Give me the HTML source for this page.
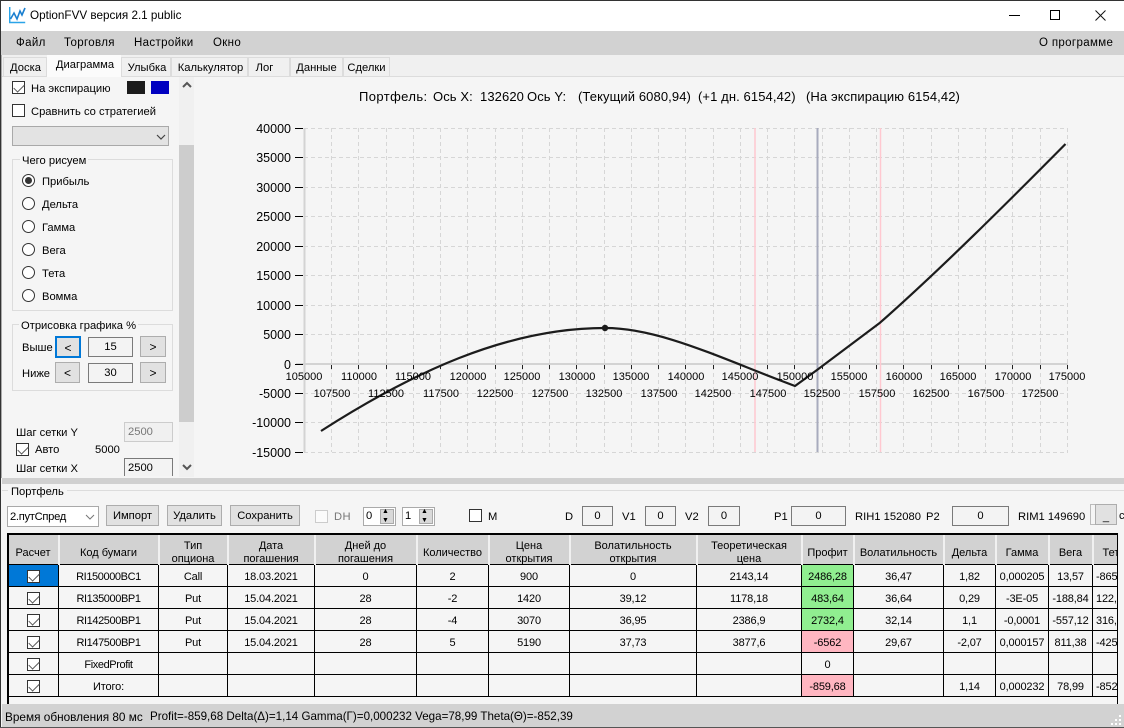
<!DOCTYPE html>
<html><head><meta charset="utf-8"><style>
*{box-sizing:border-box}
html,body{margin:0;padding:0}
body{width:1124px;height:728px;position:relative;overflow:hidden;background:#f5f5f5;font:11.2px "Liberation Sans",sans-serif;color:#000}
.a{position:absolute}
.t{position:absolute;white-space:nowrap;line-height:14px}
.m{font-size:11.5px;letter-spacing:.35px}
.h{font-size:13px;letter-spacing:.1px;top:90px}
.cb{position:absolute;width:13px;height:13px;border:1px solid #333;background:#fff}
.r{position:absolute;width:13px;height:13px;border:1px solid #333;border-radius:50%;background:#fff;left:22px}
.btn{position:absolute;background:#e1e1e1;border:1px solid #adadad;text-align:center;line-height:19px;padding-top:1px}
.ar{font-size:12px;line-height:18px}
.box{position:absolute;border:1px solid #7a7a7a;background:#f3f3f3;text-align:center;line-height:18px}
.tab{position:absolute;top:57px;height:19px;border:1px solid #dcdcdc;border-bottom:0;background:#f0f0f0;text-align:center;line-height:20px}
table{position:absolute;left:8px;top:530px;border-collapse:collapse;table-layout:fixed;width:1109px;height:165px}
td,th{border:1px solid #000;padding:0;text-align:center;font-weight:normal;font-size:11px;line-height:13px;overflow:hidden;white-space:nowrap}
th{background:#d2d2d2;border:0;border-right:2px solid #f0f0f0;height:33px;border-bottom:1px solid #000;border-top:2px solid #000;padding-top:6px}
th span{position:relative;top:2px}
td{height:22px;background:#f5f5f5;padding-top:4px;letter-spacing:-.15px}
td.n{letter-spacing:-.4px}
td.l{text-align:left;padding-left:3px}
td.g{background:#90ee90}td.p{background:#ffb6c1}td.s{background:#0078d7}
.c{display:inline-block;width:13px;height:13px;border:1px solid #333;background:#fff;vertical-align:middle;position:relative;top:-1px}
.c:after,.cb.k:after{content:"";position:absolute;left:1px;top:1px;width:9px;height:5px;border-left:1px solid #555;border-bottom:1px solid #555;transform:rotate(-45deg);margin-top:1px}
</style></head><body>

<div class="a" style="left:0;top:0;width:1124px;height:31px;background:#fff;border-top:1px solid #333"></div>
<svg class="a" style="left:9px;top:6px" width="17" height="18" viewBox="0 0 17 18"><path d="M.7 1v15.500h15.500" fill="none" stroke="#2aa4e8" stroke-width="1.500"/><path d="M1.500 13 5 7l3 6 3-8 2 4 3-7" fill="none" stroke="#1a7fd0" stroke-width="1.600"/></svg>
<div class="t" style="left:30px;top:9px;font-size:11.7px">OptionFVV версия 2.1 public</div>
<div class="a" style="left:1009px;top:15px;width:11px;height:1px;background:#000"></div>
<div class="a" style="left:1050px;top:10px;width:10px;height:10px;border:1px solid #000"></div>
<svg class="a" style="left:1095px;top:10px" width="11" height="11"><path d="M.5.5l10 10M10.500.5l-10 10" stroke="#111" fill="none"/></svg>

<div class="a" style="left:0;top:31px;width:1124px;height:24px;background:#d2d2d2"></div>
<div class="t m" style="left:16px;top:36px">Файл</div>
<div class="t m" style="left:64px;top:36px">Торговля</div>
<div class="t m" style="left:134px;top:36px">Настройки</div>
<div class="t m" style="left:213px;top:36px">Окно</div>
<div class="t m" style="left:1039px;top:36px">О программе</div>

<div class="a" style="left:0;top:55px;width:1124px;height:21px;background:#f0f0f0"></div>
<div class="tab" style="left:3px;width:44px;padding-left:1px">Доска</div>
<div class="tab" style="left:121px;width:50px;padding-left:2px">Улыбка</div>
<div class="tab" style="left:171px;width:77px;padding-left:2px">Калькулятор</div>
<div class="tab" style="left:248px;width:42px;padding-right:9px">Лог</div>
<div class="tab" style="left:290px;width:53px">Данные</div>
<div class="tab" style="left:343px;width:47px">Сделки</div>
<div class="tab" style="left:47px;width:74px;top:55px;height:22px;background:#fbfbfb;border:0;line-height:21px;padding-left:2px">Диаграмма</div>
<div class="a" style="left:2px;top:76px;width:45px;height:1px;background:#dcdcdc"></div>
<div class="a" style="left:121px;top:76px;width:1003px;height:1px;background:#dcdcdc"></div>

<div class="a" style="left:0;top:0;width:1px;height:728px;background:#333"></div>
<div class="a" style="left:1px;top:55px;width:1px;height:423px;background:#aaa"></div>

<!-- left panel -->
<div class="a" style="left:179px;top:77px;width:15px;height:400px;background:#f0f0f0"></div>
<div class="a" style="left:179px;top:145px;width:15px;height:277px;background:#cdcdcd"></div>
<svg class="a" style="left:182px;top:81px" width="10" height="8"><path d="M1 6l4-4 4 4" fill="none" stroke="#555" stroke-width="2"/></svg>
<svg class="a" style="left:182px;top:463px" width="10" height="8"><path d="M1 2l4 4 4-4" fill="none" stroke="#555" stroke-width="2"/></svg>

<div class="cb k" style="left:12px;top:81px"></div>
<div class="t" style="left:31px;top:82px">На экспирацию</div>
<div class="a" style="left:127px;top:81px;width:18px;height:13px;background:#1c1c1c"></div>
<div class="a" style="left:151px;top:81px;width:18px;height:13px;background:#0000c0"></div>
<div class="cb" style="left:12px;top:104px"></div>
<div class="t" style="left:31px;top:105px">Сравнить со стратегией</div>
<div class="a" style="left:12px;top:126px;width:157px;height:20px;background:#e3e3e3;border:1px solid #a9a9a9"></div>
<svg class="a" style="left:156px;top:134px" width="10" height="7"><path d="M1 1l4 4 4-4" fill="none" stroke="#444" stroke-width="1.200"/></svg>

<div class="a" style="left:12px;top:159px;width:161px;height:152px;border:1px solid #dcdcdc"></div>
<div class="t" style="left:20px;top:155px;background:#f5f5f5;padding:0 2px;line-height:12px">Чего рисуем</div>
<div class="r" style="top:174px"></div><div class="a" style="left:25px;top:177px;width:7px;height:7px;border-radius:50%;background:#333"></div>
<div class="t" style="left:42px;top:175px">Прибыль</div>
<div class="r" style="top:197px"></div><div class="t" style="left:42px;top:198px">Дельта</div>
<div class="r" style="top:220px"></div><div class="t" style="left:42px;top:221px">Гамма</div>
<div class="r" style="top:243px"></div><div class="t" style="left:42px;top:244px">Вега</div>
<div class="r" style="top:266px"></div><div class="t" style="left:42px;top:267px">Тета</div>
<div class="r" style="top:289px"></div><div class="t" style="left:42px;top:290px">Вомма</div>

<div class="a" style="left:12px;top:324px;width:161px;height:67px;border:1px solid #dcdcdc"></div>
<div class="t" style="left:19px;top:320px;background:#f5f5f5;padding:0 2px;line-height:12px">Отрисовка графика %</div>
<div class="t" style="left:22px;top:341px">Выше</div>
<div class="btn ar" style="left:55px;top:336px;width:26px;height:22px;border:2px solid #0078d7">&lt;</div>
<div class="box" style="left:88px;top:337px;width:45px;height:20px">15</div>
<div class="btn ar" style="left:140px;top:336px;width:26px;height:21px">&gt;</div>
<div class="t" style="left:22px;top:367px">Ниже</div>
<div class="btn ar" style="left:55px;top:362px;width:25px;height:21px">&lt;</div>
<div class="box" style="left:88px;top:363px;width:45px;height:20px">30</div>
<div class="btn ar" style="left:140px;top:362px;width:26px;height:21px">&gt;</div>

<div class="t" style="left:16px;top:426px">Шаг сетки Y</div>
<div class="a" style="left:124px;top:422px;width:49px;height:20px;border:1px solid #ccc;background:#f0f0f0;color:#777;padding:3px 3px;line-height:13px">2500</div>
<div class="cb k" style="left:16px;top:443px"></div>
<div class="t" style="left:35px;top:443px">Авто</div>
<div class="t" style="left:95px;top:443px">5000</div>
<div class="t" style="left:16px;top:462px">Шаг сетки X</div>
<div class="a" style="left:124px;top:458px;width:49px;height:18px;border:1px solid #7a7a7a;border-bottom:0;background:#f3f3f3;padding:3px;line-height:13px">2500</div>

<!-- chart -->
<div class="t h" style="left:359px;letter-spacing:.4px">Портфель:</div>
<div class="t h" style="left:433px">Ось X:</div>
<div class="t h" style="left:480px">132620</div>
<div class="t h" style="left:527px">Ось Y:</div>
<div class="t h" style="left:578px">(Текущий 6080,94)</div>
<div class="t h" style="left:698px">(+1 дн. 6154,42)</div>
<div class="t h" style="left:806px">(На экспирацию 6154,42)</div>
<svg class="a" style="left:194px;top:110px" width="930" height="368" viewBox="194 110 930 368" font-family="Liberation Sans" font-size="12.5">
<g stroke="#d6d6d6" stroke-dasharray="4 3" fill="none">
<path d="M304 128.500H1068M304 157.500H1068M304 187.500H1068M304 216.500H1068M304 246.500H1068M304 275.500H1068M304 305.500H1068M304 334.500H1068M304 393.500H1068M304 422.500H1068M304 452.500H1068"/>
<path d="M331.500 128V452M358.500 128V452M386.500 128V452M413.500 128V452M440.500 128V452M467.500 128V452M495.500 128V452M522.500 128V452M549.500 128V452M576.500 128V452M604.500 128V452M631.500 128V452M658.500 128V452M685.500 128V452M713.500 128V452M740.500 128V452M767.500 128V452M794.500 128V452M822.500 128V452M849.500 128V452M876.500 128V452M903.500 128V452M931.500 128V452M958.500 128V452M985.500 128V452M1012.500 128V452M1040.500 128V452M1067.500 128V452"/>
</g>
<path d="M304.500 128V452" stroke="#d3d3d3" stroke-width="2"/>
<path d="M296 364H1068" stroke="#d3d3d3" stroke-width="2"/>
<path d="M755 128V452M880.500 128V452" stroke="#ffc8d0" stroke-width="1.500"/>
<path d="M817.500 128V452" stroke="#a8abbd" stroke-width="2"/>
<path d="M295 128.500h8M295 157.500h8M295 187.500h8M295 216.500h8M295 246.500h8M295 275.500h8M295 305.500h8M295 334.500h8M295 364.500h8M295 393.500h8M295 422.500h8M295 452.500h8" stroke="#000"/>
<path d="M331.500 365v4M386.500 365v4M440.500 365v4M495.500 365v4M549.500 365v4M604.500 365v4M658.500 365v4M713.500 365v4M767.500 365v4M822.500 365v4M876.500 365v4M931.500 365v4M985.500 365v4M1040.500 365v4M358.500 365v4M413.500 365v4M467.500 365v4M522.500 365v4M576.500 365v4M631.500 365v4M685.500 365v4M740.500 365v4M794.500 365v4M849.500 365v4M903.500 365v4M958.500 365v4M1012.500 365v4M1067.500 365v4" stroke="#222"/>
<path d="M321 431C410 374 505 328 605 328C660 328 720 358 795 386L817 370L880 322.700C940 270 1010 200 1065.500 144" fill="none" stroke="#1c1c1c" stroke-width="2.200" stroke-linejoin="round"/>
<circle cx="605" cy="328" r="3.200" fill="#1c1c1c"/>
<g text-anchor="end">
<text x="291" y="133">40000</text><text x="291" y="162">35000</text><text x="291" y="192">30000</text><text x="291" y="221">25000</text><text x="291" y="251">20000</text><text x="291" y="280">15000</text><text x="291" y="310">10000</text><text x="291" y="339">5000</text><text x="291" y="369">0</text><text x="291" y="398">-5000</text><text x="291" y="427">-10000</text><text x="291" y="457">-15000</text>
</g>
<g text-anchor="middle" font-size="11">
<text x="304" y="380">105000</text><text x="359" y="380">110000</text><text x="413" y="380">115000</text><text x="468" y="380">120000</text><text x="522" y="380">125000</text><text x="577" y="380">130000</text><text x="631" y="380">135000</text><text x="686" y="380">140000</text><text x="740" y="380">145000</text><text x="795" y="380">150000</text><text x="849" y="380">155000</text><text x="904" y="380">160000</text><text x="958" y="380">165000</text><text x="1013" y="380">170000</text><text x="1067" y="380">175000</text>
<text x="332" y="397">107500</text><text x="386" y="397">112500</text><text x="441" y="397">117500</text><text x="495" y="397">122500</text><text x="550" y="397">127500</text><text x="604" y="397">132500</text><text x="659" y="397">137500</text><text x="713" y="397">142500</text><text x="768" y="397">147500</text><text x="822" y="397">152500</text><text x="877" y="397">157500</text><text x="931" y="397">162500</text><text x="986" y="397">167500</text><text x="1040" y="397">172500</text>
</g>
</svg>

<!-- splitter -->
<div class="a" style="left:2px;top:478px;width:1122px;height:6px;background:#d0d0d0"></div>

<!-- portfolio -->
<div class="a" style="left:2px;top:490px;width:1122px;height:1px;background:#dcdcdc"></div>
<div class="t" style="left:8px;top:486px;background:#f5f5f5;padding:0 3px;line-height:12px">Портфель</div>

<table>
<colgroup><col style="width:50px"><col style="width:100px"><col style="width:69px"><col style="width:87px"><col style="width:102px"><col style="width:72px"><col style="width:81px"><col style="width:127px"><col style="width:105px"><col style="width:52px"><col style="width:90px"><col style="width:52px"><col style="width:53px"><col style="width:44px"><col style="width:25px"></colgroup>
<tr><th><span>Расчет</span></th><th><span>Код бумаги</span></th><th><span>Тип<br>опциона</span></th><th><span>Дата<br>погашения</span></th><th><span>Дней до<br>погашения</span></th><th><span>Количество</span></th><th><span>Цена<br>открытия</span></th><th><span>Волатильность<br>открытия</span></th><th><span>Теоретическая<br>цена</span></th><th><span>Профит</span></th><th><span>Волатильность</span></th><th><span>Дельта</span></th><th><span>Гамма</span></th><th><span>Вега</span></th><th style="text-align:left;padding-left:9px"><span>Тета</span></th></tr>
<tr><td class="s"><span class="c"></span></td><td class="n">RI150000BC1</td><td>Call</td><td>18.03.2021</td><td>0</td><td>2</td><td>900</td><td>0</td><td>2143,14</td><td class="g">2486,28</td><td>36,47</td><td>1,82</td><td>0,000205</td><td>13,57</td><td class="l">-865,</td></tr>
<tr><td><span class="c"></span></td><td class="n">RI135000BP1</td><td>Put</td><td>15.04.2021</td><td>28</td><td>-2</td><td>1420</td><td>39,12</td><td>1178,18</td><td class="g">483,64</td><td>36,64</td><td>0,29</td><td>-3E-05</td><td>-188,84</td><td class="l">122,</td></tr>
<tr><td><span class="c"></span></td><td class="n">RI142500BP1</td><td>Put</td><td>15.04.2021</td><td>28</td><td>-4</td><td>3070</td><td>36,95</td><td>2386,9</td><td class="g">2732,4</td><td>32,14</td><td>1,1</td><td>-0,0001</td><td>-557,12</td><td class="l">316,</td></tr>
<tr><td><span class="c"></span></td><td class="n">RI147500BP1</td><td>Put</td><td>15.04.2021</td><td>28</td><td>5</td><td>5190</td><td>37,73</td><td>3877,6</td><td class="p">-6562</td><td>29,67</td><td>-2,07</td><td>0,000157</td><td>811,38</td><td class="l">-425</td></tr>
<tr><td><span class="c"></span></td><td class="n">FixedProfit</td><td></td><td></td><td></td><td></td><td></td><td></td><td></td><td>0</td><td></td><td></td><td></td><td></td><td></td></tr>
<tr><td><span class="c"></span></td><td>Итого:</td><td></td><td></td><td></td><td></td><td></td><td></td><td></td><td class="p">-859,68</td><td></td><td>1,14</td><td>0,000232</td><td>78,99</td><td class="l">-852</td></tr>
</table>
<div class="a" style="left:2px;top:529px;width:1122px;height:4px;background:#f5f5f5"></div>
<div class="a" style="left:7px;top:533px;width:2px;height:171px;background:#000"></div>
<div class="a" style="left:7px;top:533px;width:1110px;height:2px;background:#000"></div>
<div class="a" style="left:1117px;top:533px;width:1px;height:171px;background:#000"></div>

<div class="a" style="left:7px;top:506px;width:92px;height:21px;background:#fff;border:1px solid #a9a9a9;padding:4px 2px;line-height:13px;letter-spacing:-.3px">2.путСпред</div>
<svg class="a" style="left:85px;top:514px" width="10" height="7"><path d="M1 1l4 4 4-4" fill="none" stroke="#777"/></svg>
<div class="btn" style="left:106px;top:505px;width:53px;height:21px">Импорт</div>
<div class="btn" style="left:167px;top:505px;width:55px;height:21px">Удалить</div>
<div class="btn" style="left:230px;top:505px;width:70px;height:21px">Сохранить</div>
<div class="a" style="left:315px;top:510px;width:13px;height:13px;border:1px solid #ccc;background:#fbfbfb"></div>
<div class="t" style="left:334px;top:510px;color:#777;letter-spacing:.4px">DH</div>

<div class="a" style="left:363px;top:507px;width:33px;height:19px;border:1px solid #aaa;background:#fff;padding:2px;line-height:13px">0</div>
<div class="a" style="left:380px;top:509px;width:14px;height:15px;background:#d9d9d9;border:1px solid #aaa"></div>
<div class="t" style="left:382px;top:507px;font-size:7px;line-height:9px">▲<br>▼</div>
<div class="a" style="left:402px;top:507px;width:33px;height:19px;border:1px solid #aaa;background:#fff;padding:2px;line-height:13px">1</div>
<div class="a" style="left:419px;top:509px;width:14px;height:15px;background:#d9d9d9;border:1px solid #aaa"></div>
<div class="t" style="left:421px;top:507px;font-size:7px;line-height:9px">▲<br>▼</div>

<div class="cb" style="left:469px;top:509px"></div>
<div class="t" style="left:488px;top:510px">M</div>
<div class="t" style="left:565px;top:510px">D</div>
<div class="box" style="left:582px;top:506px;width:31px;height:20px">0</div>
<div class="t" style="left:622px;top:510px">V1</div>
<div class="box" style="left:645px;top:506px;width:31px;height:20px">0</div>
<div class="t" style="left:685px;top:510px">V2</div>
<div class="box" style="left:708px;top:506px;width:32px;height:20px">0</div>
<div class="t" style="left:774px;top:510px">P1</div>
<div class="box" style="left:791px;top:506px;width:55px;height:20px">0</div>
<div class="t" style="left:855px;top:510px">RIH1 152080</div>
<div class="t" style="left:926px;top:510px">P2</div>
<div class="box" style="left:952px;top:506px;width:57px;height:20px">0</div>
<div class="t" style="left:1018px;top:510px">RIM1 149690</div>
<div class="a" style="left:1090px;top:504px;width:5px;height:21px;border:1px solid #bbb;border-right:0"></div>
<div class="btn" style="left:1095px;top:504px;width:22px;height:21px;line-height:22px">_</div>
<div class="t" style="left:1119px;top:509px">c</div>

<!-- status -->
<div class="a" style="left:2px;top:704px;width:1122px;height:23px;background:#d2d2d2"></div>
<div class="a" style="left:0;top:727px;width:1124px;height:1px;background:#555"></div>
<div class="t" style="left:5px;top:710px;font-size:11.8px">Время обновления 80 мс</div>
<div class="t" style="left:150px;top:710px;font-size:11.6px">Profit=-859,68 Delta(Δ)=1,14 Gamma(Γ)=0,000232 Vega=78,99 Theta(Θ)=-852,39</div>
<svg class="a" style="left:1111px;top:714px" width="12" height="12" fill="#fff"><path d="M8 1h2v2H8zM4 5h2v2H4zM8 5h2v2H8zM0 9h2v2H0zM4 9h2v2H4zM8 9h2v2H8z"/></svg>
</body></html>
